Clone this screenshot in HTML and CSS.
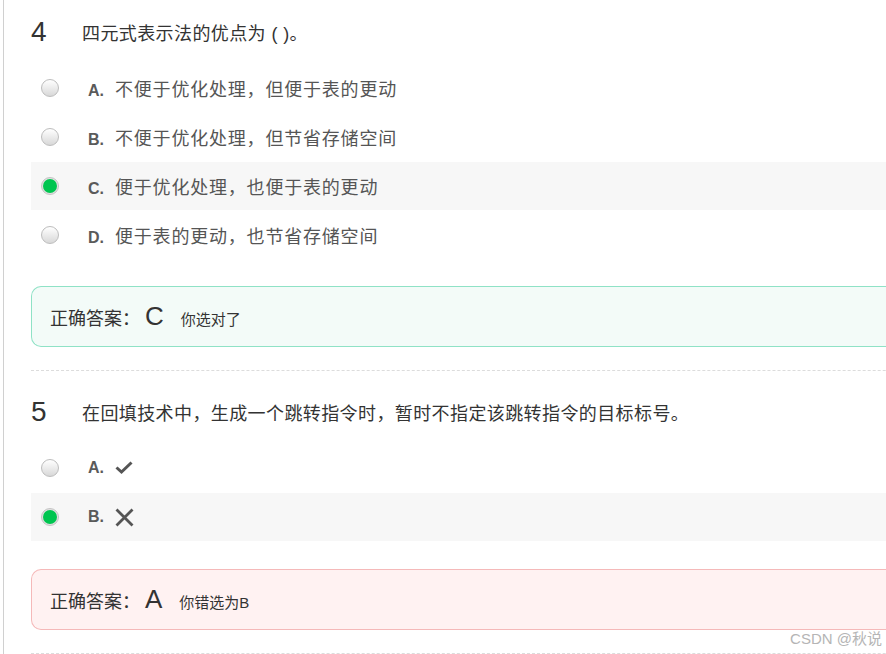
FILE: index.html
```html
<!DOCTYPE html>
<html lang="zh-CN">
<head>
  <meta charset="UTF-8">
  <meta name="viewport" content="width=device-width, initial-scale=1.0">
  <title>作业答题结果</title>
  <link rel="stylesheet" href="styles.css">
</head>
<body>
  <div class="page">
    <div class="question">
      <div class="q-title">
        <span class="q-num">4</span>
        <span class="q-text">四元式表示法的优点为 ( )。</span>
      </div>
      <ul class="options">
        <li class="option">
          <span class="radio"></span>
          <span class="opt-body">
            <span class="opt-label">A.</span>
            <span class="opt-text">不便于优化处理，但便于表的更动</span>
          </span>
        </li>
        <li class="option">
          <span class="radio"></span>
          <span class="opt-body">
            <span class="opt-label">B.</span>
            <span class="opt-text">不便于优化处理，但节省存储空间</span>
          </span>
        </li>
        <li class="option checked">
          <span class="radio"></span>
          <span class="opt-body">
            <span class="opt-label">C.</span>
            <span class="opt-text">便于优化处理，也便于表的更动</span>
          </span>
        </li>
        <li class="option">
          <span class="radio"></span>
          <span class="opt-body">
            <span class="opt-label">D.</span>
            <span class="opt-text">便于表的更动，也节省存储空间</span>
          </span>
        </li>
      </ul>
      <div class="answer right">
        <span class="ans-title">正确答案：</span>
        <span class="ans-key">C</span>
        <span class="ans-note">你选对了</span>
      </div>
    </div>

    <div class="question">
      <div class="q-title">
        <span class="q-num">5</span>
        <span class="q-text">在回填技术中，生成一个跳转指令时，暂时不指定该跳转指令的目标标号。</span>
      </div>
      <ul class="options">
        <li class="option">
          <span class="radio"></span>
          <span class="opt-body">
            <span class="opt-label">A.</span>
            <svg class="judge-icon" width="18" height="14" viewBox="0 0 18 14">
              <path d="M1.5 6.5 L6.5 11 L16.5 1.5" fill="none" stroke="#555" stroke-width="3"/>
            </svg>
          </span>
        </li>
        <li class="option checked">
          <span class="radio"></span>
          <span class="opt-body">
            <span class="opt-label">B.</span>
            <svg class="judge-icon" width="19" height="19" viewBox="0 0 19 19">
              <path d="M1.5 1.5 L17.5 17.5 M17.5 1.5 L1.5 17.5" fill="none" stroke="#555" stroke-width="2.8"/>
            </svg>
          </span>
        </li>
      </ul>
      <div class="answer wrong">
        <span class="ans-title">正确答案：</span>
        <span class="ans-key">A</span>
        <span class="ans-note">你错选为B</span>
      </div>
    </div>
  </div>

  <div class="watermark">CSDN @秋说</div>
</body>
</html>
```

FILE: styles.css
```css
body {
  margin: 0;
  background-color: #ffffff;
  font-family: "Liberation Sans", "Noto Sans CJK SC", sans-serif;
  color: #333;
  overflow: hidden;
  height: 654px;
  position: relative;
}
.page {
  margin-left: 3px;
  border-left: 1px solid #d0d0d0;
  padding-left: 27px;
  width: 1000px;
  min-height: 654px;
}
.question {
  padding-top: 26px;
  padding-bottom: 23px;
  border-bottom: 1px dashed #dcdcdc;
}
.question:first-child {
  padding-top: 17px;
}
.q-title {
  display: flex;
  align-items: center;
  height: 30px;
}
.q-num {
  width: 51px;
  font-size: 28px;
  color: #333;
}
.q-text {
  font-size: 18px;
  letter-spacing: 0.4px;
  color: #333;
}
.options {
  list-style: none;
  margin: 17px 0 0 0;
  padding: 0;
}
.option {
  display: flex;
  align-items: center;
  height: 48px;
  margin-bottom: 1px;
  padding-left: 10px;
}
.option.checked {
  background-color: #f7f7f7;
}
.radio {
  width: 16px;
  height: 16px;
  border-radius: 50%;
  border: 1px solid #bdbdbd;
  background: linear-gradient(#ffffff, #d8d8d8);
  flex-shrink: 0;
  position: relative;
}
.option.checked .radio {
  background: #e2e2e2;
  border-color: #c4c4c4;
}
.option.checked .radio::after {
  content: "";
  position: absolute;
  left: 1px;
  top: 1px;
  width: 14px;
  height: 14px;
  border-radius: 50%;
  background-color: #00c550;
}
.opt-body {
  display: flex;
  align-items: baseline;
  margin-left: 29px;
}
.opt-label {
  width: 27px;
  font-size: 16px;
  font-weight: bold;
  color: #5a5a5a;
}
.opt-text {
  font-size: 18px;
  letter-spacing: 0.8px;
  color: #555;
}
.judge-icon {
  display: block;
  align-self: center;
}
.answer {
  display: flex;
  align-items: center;
  margin-top: 27px;
  height: 59px;
  padding-left: 18px;
  border-radius: 10px 0 0 10px;
  border: 1px solid #8fe2c6;
  border-right: none;
  background-color: #f3fbf8;
}
.answer.wrong {
  margin-top: 28px;
  border-color: #f5b9b9;
  background-color: #fff2f2;
}
.ans-title {
  font-size: 18px;
  color: #333;
}
.ans-key {
  margin-left: 5px;
  font-size: 26px;
  color: #333;
}
.ans-note {
  margin-left: 17px;
  padding-top: 4px;
  font-size: 15px;
  color: #333;
}
.watermark {
  position: absolute;
  right: 4px;
  bottom: 6px;
  font-size: 15px;
  color: #b5b5b5;
  text-shadow: 0 0 2px #ffffff;
}
```
